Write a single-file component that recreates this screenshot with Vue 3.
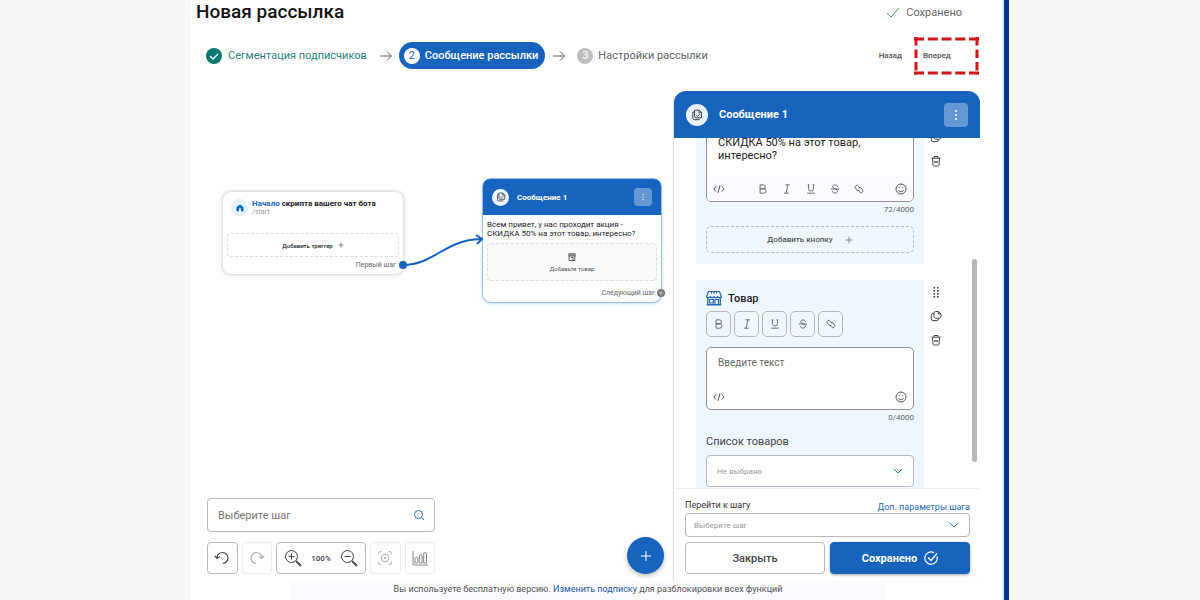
<script setup>
import { ref } from 'vue'

const message = ref('Всем привет, у нас проходит\nакция -\nСКИДКА 50% на этот товар,\nинтересно?')
const product = ref('')
const formats = ['Жирный', 'Курсив', 'Подчеркнутый', 'Зачеркнутый', 'Ссылка']
</script>

<template>
  <svg class="defs" aria-hidden="true">
    <symbol id="f0" viewBox="0 0 12 12"><path d="M2.500 1h4a2.400 2.400 0 0 1 0 4.800h-4zM2.500 5.800H7a2.600 2.600 0 0 1 0 5.200H2.500z" /></symbol>
    <symbol id="f1" viewBox="0 0 12 12"><path d="M4 1h5.500M2.500 11H8M7 1 5 11" /></symbol>
    <symbol id="f2" viewBox="0 0 12 12"><path d="M3 1v4.500a3 3 0 0 0 6 0V1M1.500 11h9M2 1h2M8 1h2" /></symbol>
    <symbol id="f3" viewBox="0 0 12 12"><path d="M9 3.200C8.600.5 3.400.3 3.200 3.400c0 2.400 5.800 2.200 5.800 4.800 0 3.600-5.900 3.600-6.200.3M1 6h10" /></symbol>
    <symbol id="f4" viewBox="0 0 12 12"><path d="M7.300 5.500 5.300 2.500a2.100 2.100 0 1 0-3.600 2.300l1.500 2.200a2.100 2.100 0 0 0 3 .5M4.700 6.500l2 3a2.100 2.100 0 1 0 3.600-2.300L8.800 5a2.100 2.100 0 0 0-3-.5" /></symbol>
    <symbol id="code" viewBox="0 0 12 12"><path d="M3.200 3.500.8 6l2.400 2.500M8.800 3.500 11.200 6 8.800 8.500M7 2.200 5 9.800" /></symbol>
    <symbol id="smile" viewBox="0 0 12 12"><circle cx="6" cy="6" r="5" /><path d="M3.300 7c.8 2.300 4.600 2.300 5.400 0M4.200 3.800v1M7.800 3.800v1" /></symbol>
    <symbol id="chevron" viewBox="0 0 12 12"><path d="m2 4 4 4 4-4" /></symbol>
    <symbol id="copy" viewBox="0 0 12 12"><path d="M5.500 1.500h3L11 4v2.700a1.500 1.500 0 0 1-1.500 1.500h-4A1.500 1.500 0 0 1 4 6.700V3a1.500 1.500 0 0 1 1.500-1.500zM8.300 1.500V4H11M4 3.500H3A1.800 1.800 0 0 0 1.300 5.300v3.500A1.800 1.800 0 0 0 3 10.600h3.700a1.800 1.800 0 0 0 1.800-1.800v-.6" /></symbol>
    <symbol id="trash" viewBox="0 0 12 12"><path d="M1.500 3.200h9M4 3V1.500h4V3M2.500 3.200l.4 6.300c0 1 .6 1.500 1.500 1.500h3.200c.9 0 1.500-.5 1.500-1.500l.4-6.300M4.500 7h3M5 6v2M7 6v2" /></symbol>
    <symbol id="drag" viewBox="0 0 12 12"><g fill="currentColor" stroke="none"><rect x="3.500" y="1" width="1.600" height="1.600" /><rect x="7" y="1" width="1.600" height="1.600" /><rect x="3.500" y="4" width="1.600" height="1.600" /><rect x="7" y="4" width="1.600" height="1.600" /><rect x="3.500" y="7" width="1.600" height="1.600" /><rect x="7" y="7" width="1.600" height="1.600" /><rect x="3.500" y="10" width="1.600" height="1.600" /><rect x="7" y="10" width="1.600" height="1.600" /></g></symbol>
    <symbol id="dots" viewBox="0 0 12 12"><g fill="currentColor" stroke="none"><circle cx="6" cy="2" r="1" /><circle cx="6" cy="6" r="1" /><circle cx="6" cy="10" r="1" /></g></symbol>
    <symbol id="doc" viewBox="0 0 12 12"><path d="M3.500 1.200h4.700l2.300 2.300v5.300H5A1.500 1.500 0 0 1 3.500 7.300zM8 1.200v2.500h2.500M3.500 3H1.800v6.200c0 .9.500 1.500 1.500 1.500h5.500M5.200 6l1.400 1.300L8.800 5" /></symbol>
    <symbol id="plus" viewBox="0 0 12 12"><path d="M6 1v10M1 6h10" /></symbol>
    <symbol id="arrow" viewBox="0 0 12 12"><path d="M0 6h11M7 1.500 11.500 6 7 10.500" /></symbol>
  </svg>

  <div class="page">
    <main class="app">
      <header class="top">
        <h1>Новая рассылка</h1>
        <p class="state">
          <svg class="i14" viewBox="0 0 14 14"><path d="m1 8 4 4 8-9" /></svg>
          Сохранено
        </p>
      </header>

      <nav class="steps">
        <a class="step done" href="#segment">
          <svg class="i16" viewBox="0 0 16 16"><circle cx="8" cy="8" r="8" fill="#087a6e" stroke="none" /><path d="m4 8 3 3 5-5" stroke="#fff" stroke-width="1.400" /></svg>
          Сегментация подписчиков
        </a>
        <svg class="i12 arrow"><use href="#arrow" /></svg>
        <a class="step active" href="#message"><span class="num">2</span>Сообщение рассылки</a>
        <svg class="i12 arrow"><use href="#arrow" /></svg>
        <a class="step next" href="#settings"><span class="num">3</span>Настройки рассылки</a>
        <span class="spacer"></span>
        <button class="plain">Назад</button>
        <button class="plain forward">
          Вперед
          <svg class="marker" viewBox="0 0 65 38"><path d="M0 2h65M0 36h65" stroke-width="3" stroke-dasharray="10 3.750" /><path d="M2 0v38M63 0v38" stroke-width="3" stroke-dasharray="8.500 4" /></svg>
        </button>
      </nav>

      <div class="workspace">
        <section class="canvas">
          <svg class="link" viewBox="0 0 88 40">
            <path d="M4 32C35 32 45 7 82 6M77 2l6 4-5 5" />
            <circle cx="4" cy="32" r="4" />
          </svg>
          <article class="node start">
            <div class="start-head">
              <span class="home"><svg class="i8" viewBox="0 0 8 8"><path d="M1 3.200 4 1l3 2.200V7H5.500V5a1.500 1.500 0 0 0-3 0v2H1z" /></svg></span>
              <div>
                <h2><b>Начало</b> скрипта вашего чат бота</h2>
                <p>/start</p>
              </div>
            </div>
            <button class="trigger">Добавить триггер <svg class="i6"><use href="#plus" /></svg></button>
            <p class="out">Первый шаг</p>
          </article>

          <article class="node msg">
            <header class="msg-head">
              <span class="round"><svg class="i10"><use href="#doc" /></svg></span>
              <h2>Сообщение 1</h2>
              <button class="more" aria-label="Меню"><svg class="i8"><use href="#dots" /></svg></button>
            </header>
            <p class="msg-text">Всем привет, у нас проходит акция - СКИДКА 50% на этот товар, интересно?</p>
            <button class="add-item">
              <svg class="i8" viewBox="0 0 8 8"><path d="M.5.800h7M.5 3h7M1.200 3v4.500h5.600V3M3 4.500h2v3M1 1v2M3 1v2M5 1v2M7 1v2" /></svg>
              Добавьте товар
            </button>
            <p class="out">Следующий шаг</p>
            <span class="port"><svg class="i6"><use href="#plus" /></svg></span>
          </article>

          <div class="controls">
            <div class="tools">
              <label class="search">
                <input type="text" placeholder="Выберите шаг" aria-label="Выберите шаг">
                <svg class="i12" viewBox="0 0 12 12"><circle cx="5.500" cy="5.500" r="4" /><path d="m8.500 8.500 2.500 2.500" /></svg>
              </label>
              <div class="toolbar">
                <button class="tool" aria-label="Отменить"><svg class="i16" viewBox="0 0 16 16"><path d="M3 7.500a5.500 5.500 0 1 1 5.800 6M.8 5.800 3 8.300l3-1.500" stroke-width="1.200" /></svg></button>
                <button class="tool faint" aria-label="Повторить"><svg class="i16" viewBox="0 0 16 16"><path d="M13 7.500a5.500 5.500 0 1 0-5.800 6M15.200 5.800 13 8.300l-3-1.500" stroke-width="1.200" /></svg></button>
                <div class="zoom">
                  <button aria-label="Увеличить"><svg class="i18" viewBox="0 0 18 18"><circle cx="7.500" cy="7.500" r="6" /><path d="M7.500 4.500v6M4.500 7.500h6" /><path d="m12 12 5 5" stroke-width="1.800" /></svg></button>
                  <span>100%</span>
                  <button aria-label="Уменьшить"><svg class="i18" viewBox="0 0 18 18"><circle cx="7.500" cy="7.500" r="6" /><path d="M4.500 7.500h6" /><path d="m12 12 5 5" stroke-width="1.800" /></svg></button>
                </div>
                <button class="tool faint" aria-label="По центру"><svg class="i16" viewBox="0 0 16 16"><circle cx="8" cy="8" r="3.800" /><circle cx="8" cy="8" r=".8" /><path d="M1.500 4.500v-1a2 2 0 0 1 2-2h1M11.500 1.500h1a2 2 0 0 1 2 2v1M14.500 11.500v1a2 2 0 0 1-2 2h-1M4.500 14.500h-1a2 2 0 0 1-2-2v-1" /></svg></button>
                <button class="tool faint chart" aria-label="Статистика"><svg class="i16" viewBox="0 0 16 16"><path d="M1 1v14h15M3 13V8.500a1.300 1.300 0 0 1 2.800 0V13zM7.300 13V6a1.300 1.300 0 0 1 2.800 0v7zM11.700 13V4a1.300 1.300 0 0 1 2.800 0v9z" /></svg></button>
              </div>
            </div>
            <button class="fab" aria-label="Добавить"><svg class="i12"><use href="#plus" /></svg></button>
          </div>
        </section>

        <aside class="panel">
          <header class="panel-head">
            <span class="round"><svg class="i12"><use href="#doc" /></svg></span>
            <h2>Сообщение 1</h2>
            <button class="more" aria-label="Меню"><svg class="i12"><use href="#dots" /></svg></button>
          </header>

          <div class="body">
            <div class="row">
              <div class="card first">
                <div class="field">
                  <textarea v-model="message" class="long" aria-label="Текст сообщения"></textarea>
                  <div class="bar tinted">
                    <button aria-label="Код"><svg class="i12"><use href="#code" /></svg></button>
                    <div class="marks">
                      <button v-for="(f, n) in formats" :key="f" :aria-label="f"><svg class="i10"><use :href="'#f' + n" /></svg></button>
                    </div>
                    <button aria-label="Эмодзи"><svg class="i12"><use href="#smile" /></svg></button>
                  </div>
                </div>
                <p class="count">72/4000</p>
                <button class="add">Добавить кнопку <svg class="i8"><use href="#plus" /></svg></button>
              </div>
              <div class="side">
                <button v-for="s in ['drag', 'copy', 'trash']" :key="s" :aria-label="s"><svg class="i12"><use :href="'#' + s" /></svg></button>
              </div>
            </div>

            <div class="row">
              <div class="card second">
                <h3>
                  <svg class="i16" viewBox="0 0 16 16"><path d="M2.500 1.500h11L15.200 6v1.500H.8V6zM.8 6a1.800 1.800 0 0 0 3.600 0 1.800 1.800 0 0 0 3.600 0 1.800 1.800 0 0 0 3.600 0 1.800 1.800 0 0 0 3.600 0M1.700 8v6.500h12.600V8M9 14.500v-5h3.500v5M3.500 9.500h3.800V13H3.500zM5.500 1.500v2M8 1.500v2M10.500 1.500v2M.5 15h15" stroke-width="1.200" /></svg>
                  Товар
                </h3>
                <div class="formats">
                  <button v-for="(f, n) in formats" :key="f" :aria-label="f"><svg class="i10"><use :href="'#f' + n" /></svg></button>
                </div>
                <div class="field">
                  <textarea v-model="product" class="short" placeholder="Введите текст" aria-label="Текст товара"></textarea>
                  <div class="bar">
                    <button aria-label="Код"><svg class="i12"><use href="#code" /></svg></button>
                    <button aria-label="Эмодзи"><svg class="i12"><use href="#smile" /></svg></button>
                  </div>
                </div>
                <p class="count">0/4000</p>
                <label class="list-label" for="products">Список товаров</label>
                <div class="select">
                  <select id="products"><option>Не выбрано</option></select>
                  <svg class="i12"><use href="#chevron" /></svg>
                </div>
              </div>
              <div class="side">
                <button v-for="s in ['drag', 'copy', 'trash']" :key="s" :aria-label="s"><svg class="i12"><use :href="'#' + s" /></svg></button>
              </div>
            </div>
            <span class="thumb"></span>
          </div>

          <footer class="panel-foot">
            <div class="foot-labels">
              <label for="goto">Перейти к шагу</label>
              <a href="#params">Доп. параметры шага</a>
            </div>
            <div class="select small">
              <select id="goto"><option>Выберите шаг</option></select>
              <svg class="i12"><use href="#chevron" /></svg>
            </div>
            <div class="actions">
              <button>Закрыть</button>
              <button class="primary">Сохранено <svg class="i14" viewBox="0 0 14 14"><path d="M13 5.500A6.200 6.200 0 1 1 10 1.700M4 6.500 7 9.500l6-7" stroke-width="1.200" /></svg></button>
            </div>
          </footer>
        </aside>
      </div>

      <p class="banner">Вы используете бесплатную версию. <a href="#plan">Изменить подписку</a> для разблокировки всех функций</p>
    </main>
  </div>
</template>

<style>
body { background: #f7f7f7; }
</style>

<style scoped>
* { box-sizing: border-box; }
.page { padding: 0 191px; font-family: Roboto, "Liberation Sans", sans-serif; font-size: 11px; color: #202124; }
.app { display: flex; flex-direction: column; min-height: 100vh; background: #fff; border-right: 5px solid #07348c; box-shadow: inset -2px 0 #dcecfa; overflow: hidden; }
h1, h2, h3, p { margin: 0; font-weight: 500; }
a { color: inherit; text-decoration: none; }
button { display: flex; align-items: center; justify-content: center; padding: 0; border: 0; background: none; color: inherit; font: inherit; cursor: pointer; }
svg { flex: none; fill: none; stroke: currentColor; stroke-width: 1; }
.defs { position: absolute; width: 0; height: 0; }
.i6 { width: 6px; height: 6px; }
.i8 { width: 8px; height: 8px; }
.i10 { width: 10px; height: 10px; }
.i12 { width: 12px; height: 12px; }
.i14 { width: 14px; height: 14px; }
.i16 { width: 16px; height: 16px; }
.i18 { width: 18px; height: 18px; }

.top { display: flex; align-items: center; justify-content: space-between; height: 24px; padding: 0 42px 0 5px; }
h1 { font-size: 19px; line-height: 26px; color: #111; }
.state { display: flex; align-items: center; gap: 6px; font-weight: 400; color: #666; }
.state svg { color: #43a047; }
.steps { display: flex; align-items: center; height: 27px; margin: 18px 25px 22px 15px; }
.step { display: flex; align-items: center; gap: 5px; color: #5f6368; }
.done { gap: 6px; color: #2c7f77; margin-right: 13px; }
.active { height: 27px; padding: 0 7px 0 5px; margin: 0 8px 0 7px; border-radius: 14px; background: #1763bd; color: #fff; font-weight: 500; }
.next { margin-left: 12px; }
.num { width: 16px; height: 16px; border-radius: 50%; background: #fff; color: #1763bd; font-size: 11px; line-height: 16px; text-align: center; font-weight: 400; }
.next .num { background: #c0c0c2; color: #fff; }
.arrow { color: #666; }
.spacer { flex: 1; }
.plain { font-size: 8px; font-weight: 700; color: #666; }
.forward { position: relative; width: 65px; justify-content: flex-start; padding-left: 9px; margin-left: 12px; }
.marker { position: absolute; left: 0; top: -14px; width: 65px; height: 38px; stroke: #d3141d; }

.workspace { display: flex; flex: 1; padding-right: 24px; }
.canvas { position: relative; flex: 1; }
.node { position: absolute; border-radius: 8px; background: #fff; }
.node .out { font-size: 7px; line-height: 10px; font-weight: 400; color: #666; text-align: right; }
.start { left: 32px; top: 101px; width: 180px; padding: 7px 4px 4px; box-shadow: 0 0 4px #bbb; }
.start .out { padding-right: 3px; }
.start-head { display: flex; gap: 4px; padding-left: 4px; }
.start h2 { font-size: 8px; line-height: 10px; font-weight: 700; }
.start h2 b { color: #1763bd; font-weight: 700; }
.start-head p { font-size: 7px; line-height: 7px; font-weight: 400; color: #999; }
.home { display: flex; align-items: center; justify-content: center; width: 17px; height: 17px; border-radius: 50%; background: #e3f2ff; color: #1763bd; }
.home svg { fill: #1763bd; }
.trigger { width: 100%; height: 24px; margin: 17px 0 3px; gap: 5px; border: 1px dashed #ddd; border-radius: 4px; font-size: 6px; font-weight: 500; }
.link { position: absolute; left: 208px; top: 142px; z-index: 1; width: 88px; height: 40px; stroke: #1763bd; stroke-width: 2; }
.link circle { fill: #1763bd; stroke: none; }
.msg { left: 292px; top: 88px; width: 178px; box-shadow: 0 0 0 1px #8fc0ee, 0 1px 4px #aaccee; }
.msg .out { margin: 7px 6px 4px 0; }
.msg-head { display: flex; align-items: center; gap: 8px; height: 36px; padding: 0 9px; border-radius: 7px 7px 0 0; background: #1763bd; color: #fff; }
.msg-head h2 { flex: 1; font-size: 8px; font-weight: 700; }
.round { display: flex; align-items: center; justify-content: center; width: 17px; height: 17px; border-radius: 50%; background: #e9f5ff; color: #444; }
.more { width: 18px; height: 18px; border-radius: 4px; background: #6498d5; color: #fff; }
.msg-text { padding: 5px 4px 0; font-size: 8px; line-height: 9px; font-weight: 400; }
.add-item { display: flex; flex-direction: column; gap: 4px; width: 170px; height: 38px; margin: 5px 4px 0; border: 1px dashed #ddd; border-radius: 4px; background: #fafafc; font-size: 6px; color: #555; }
.port { position: absolute; right: -4px; bottom: 5px; display: flex; align-items: center; justify-content: center; width: 8px; height: 8px; border-radius: 50%; background: #777; color: #fff; }

.controls { position: absolute; left: 16px; right: 10px; bottom: 7px; display: flex; align-items: flex-end; justify-content: space-between; }
.tools { display: flex; flex-direction: column; gap: 10px; width: 228px; }
.search { display: flex; align-items: center; height: 34px; padding: 0 9px 0 10px; border: 1px solid #b9b9bd; border-radius: 4px; color: #2a72c5; }
.search input { flex: 1; min-width: 0; padding: 0; border: 0; outline: 0; font: inherit; }
.search input::placeholder { color: #777; opacity: 1; }
.toolbar { display: flex; gap: 4px; height: 32px; }
.tool { flex: 1; border: 1px solid #b9b9bd; border-radius: 4px; color: #444; }
.faint { border-color: #ececef; color: #aaa; }
.chart { color: #888; }
.zoom { display: flex; align-items: center; justify-content: space-between; width: 90px; padding: 0 7px; border: 1px solid #b9b9bd; border-radius: 4px; font-size: 8px; font-weight: 500; color: #444; }
.fab { width: 37px; height: 37px; border-radius: 50%; background: #1763bd; color: #fff; box-shadow: 0 2px 5px #bbb; }

.panel { display: flex; flex-direction: column; width: 306px; border-radius: 12px 12px 0 0; box-shadow: -1px 0 1px #ddd; }
.panel-head { display: flex; align-items: center; gap: 11px; height: 47px; padding: 0 12px; border-radius: 12px 12px 0 0; background: #1763bd; color: #fff; }
.panel-head h2 { flex: 1; font-size: 11px; font-weight: 700; }
.panel-head .round { width: 22px; height: 22px; }
.panel-head .more { width: 24px; height: 24px; }
.body { position: relative; display: flex; flex: 1 0 350px; flex-direction: column; justify-content: flex-end; gap: 16px; height: 350px; overflow: hidden; padding: 0 32px 0 22px; }
.row { display: flex; flex: none; }
.card { flex: 1; padding: 0 10px; border-radius: 4px; background: #f0f7fe; }
.first { padding-bottom: 11px; }
.second { height: 208px; padding-top: 9px; border-radius: 4px 4px 0 0; }
.side { display: flex; flex-direction: column; width: 24px; color: #444; }
.side button { height: 24px; }
.field { border: 1px solid #919195; border-radius: 5px; background: #fff; overflow: hidden; }
textarea { display: block; width: 100%; padding: 8px 10px 0 11px; border: 0; outline: 0; resize: none; overflow: hidden; background: none; color: #222; font: 11px/13px Roboto, "Liberation Sans", sans-serif; }
textarea::placeholder { color: #666; opacity: 1; font-size: 10px; }
.long { height: 74px; }
.short { height: 36px; }
.bar { display: flex; align-items: center; justify-content: space-between; height: 25px; padding: 0 6px; color: #555; }
.tinted { background: #fafaff; }
.marks { display: flex; gap: 14px; margin-left: 2px; }
.count { font-size: 8px; line-height: 16px; font-weight: 400; color: #666; text-align: right; }
.add { width: 100%; height: 27px; margin-top: 8px; gap: 12px; border: 1px dashed #b9bec4; border-radius: 5px; font-size: 8px; font-weight: 500; color: #555; }
h3 { display: flex; align-items: center; gap: 6px; height: 18px; font-size: 11px; }
h3 svg { color: #2569ae; }
.formats { display: flex; gap: 3px; margin: 4px 0 10px; color: #555; }
.formats button { width: 25px; height: 26px; border: 1px solid #b9b9bd; border-radius: 5px; }
.list-label { display: block; margin: 8px 0 5px; font-size: 11px; line-height: 16px; color: #444; }
.select { position: relative; height: 32px; }
.select select { width: 100%; height: 100%; padding: 0 10px; border: 1px solid #b9b9bd; border-radius: 4px; appearance: none; background: #fff; color: #999; font: inherit; font-size: 8px; }
.select svg { position: absolute; right: 10px; top: 50%; margin-top: -6px; color: #2a72c5; pointer-events: none; }
.small { height: 24px; }
.small select { padding: 0 8px; }
.thumb { position: absolute; right: 3px; top: 121px; width: 5px; height: 203px; border-radius: 3px; background: #b8b8bd; }
.panel-foot { padding: 8px 10px 7px 11px; border-top: 1px solid #eee; }
.foot-labels { display: flex; justify-content: space-between; height: 16px; font-size: 9px; line-height: 16px; color: #333; }
.foot-labels a { line-height: 20px; color: #2a68ac; }
.actions { display: flex; gap: 5px; margin-top: 5px; }
.actions button { flex: 1; height: 32px; gap: 7px; border: 1px solid #b9b9bd; border-radius: 4px; font-size: 11px; font-weight: 500; color: #444; }
.actions .primary { border-color: #1763bd; background: #1763bd; color: #fff; font-weight: 700; box-shadow: 0 1px 3px #aaa; }
.banner { height: 19px; margin: 0 118px 0 99px; background: #fafaff; font-size: 9px; line-height: 17px; font-weight: 400; text-align: center; white-space: nowrap; color: #555; }
.banner a { color: #1f58a5; }
</style>
